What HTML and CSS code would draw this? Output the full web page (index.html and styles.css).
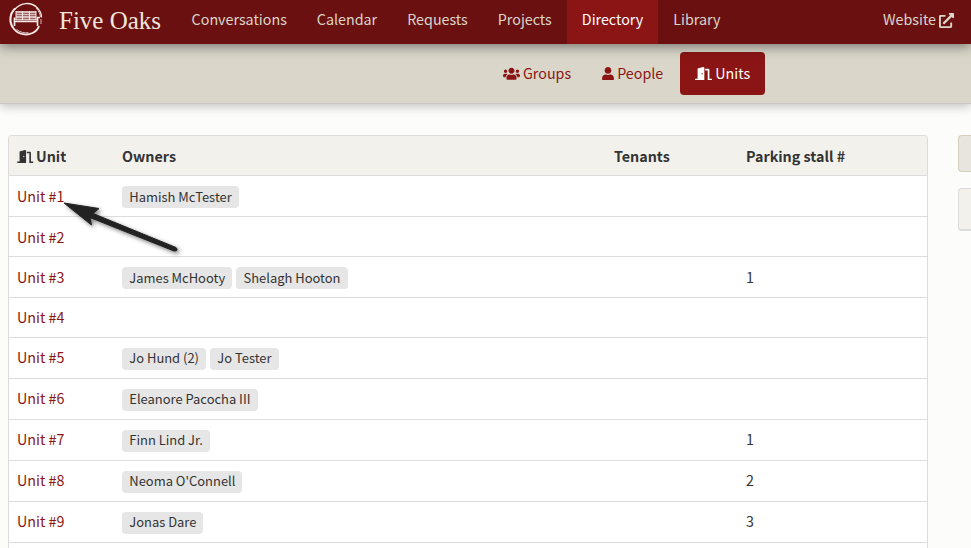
FILE: index.html
```html
<!DOCTYPE html>
<html lang="en">
<head>
<meta charset="utf-8">
<title>Five Oaks</title>
<link rel="stylesheet" href="styles.css">
</head>
<body>
<svg class="defs" width="0" height="0">
  <symbol id="door" viewBox="0 0 640 512"><path d="M624 448h-80V113.450C544 86.190 522.470 64 496 64H384v64h96v384h144c8.840 0 16-7.160 16-16v-32c0-8.840-7.160-16-16-16zM312.240 1.010l-192 49.740C105.990 54.440 96 67.700 96 82.920V448H16c-8.840 0-16 7.160-16 16v32c0 8.840 7.160 16 16 16h336V33.180c0-21.580-19.560-37.410-39.760-32.170zM264 288c-13.250 0-24-14.330-24-32s10.750-32 24-32 24 14.330 24 32-10.750 32-24 32z"/></symbol>
</svg>
<header class="topbar">
  <svg class="logo" viewBox="0 0 36 36" fill="none" stroke="#f4e9e6">
    <path d="M7 7.500C1.500 13 1 22 6 28s13 6.500 18.500 4c3.500-1.600 5.500-4 6.500-7" stroke-width="1.900"/>
    <path d="M6.500 8.500C13 1 23 .8 29 6.500c3 3 4.500 7 4.500 10" stroke-width="1.300"/>
    <path d="M3.500 11C1 17 1.500 23 4.500 27M28 7c3 3 4 6 4.500 9M33 18v5M8.500 28.500c4 3 8 3.600 12 3.200" stroke-width=".8"/>
    <path d="M8 11h20M8 13.500h20M8 16h20M7.500 18.500h21" stroke-width="1.800" opacity=".8"/>
    <path d="M8 10v9M14.500 10v9M21.500 10v9M28 10v9" stroke-width="1"/>
    <path d="M6 20.500h24M6.500 16.500v8.500M29.500 16.500v8.500M29 16.500h3" stroke-width="1.700"/>
  </svg>
  <a class="brand">Five Oaks</a>
  <nav class="mainnav">
    <a>Conversations</a><a>Calendar</a><a>Requests</a><a>Projects</a><a class="active">Directory</a><a>Library</a>
  </nav>
  <a class="website">Website <svg viewBox="0 0 512 512"><path d="M432,320H400a16,16,0,0,0-16,16V448H64V128H208a16,16,0,0,0,16-16V80a16,16,0,0,0-16-16H48A48,48,0,0,0,0,112V464a48,48,0,0,0,48,48H400a48,48,0,0,0,48-48V336A16,16,0,0,0,432,320ZM488,0h-128c-21.370,0-32.050,25.910-17,41l35.730,35.730L135,320.370a24,24,0,0,0,0,34L157.670,377a24,24,0,0,0,34,0L435.280,133.320,471,169c15,15,41,4.500,41-17V24A24,24,0,0,0,488,0Z"/></svg></a>
</header>
<div class="subnav">
  <a class="groups"><svg viewBox="0 0 640 512"><path d="M96 224c35.300 0 64-28.700 64-64s-28.700-64-64-64-64 28.700-64 64 28.700 64 64 64zm448 0c35.300 0 64-28.700 64-64s-28.700-64-64-64-64 28.700-64 64 28.700 64 64 64zm32 32h-64c-17.600 0-33.500 7.100-45.100 18.600 40.300 22.100 68.900 62 75.100 109.400h66c17.700 0 32-14.300 32-32v-32c0-35.300-28.700-64-64-64zm-256 0c61.900 0 112-50.100 112-112S381.900 32 320 32 208 82.100 208 144s50.100 112 112 112zm76.800 32h-8.300c-20.800 10-43.900 16-68.500 16s-47.600-6-68.500-16h-8.300C179.600 288 128 339.600 128 403.200V432c0 26.500 21.500 48 48 48h288c26.500 0 48-21.500 48-48v-28.800c0-63.600-51.600-115.200-115.200-115.200zm-223.700-13.400C161.500 263.100 145.600 256 128 256H64c-35.300 0-64 28.700-64 64v32c0 17.700 14.300 32 32 32h65.900c6.300-47.400 34.900-87.300 75.200-109.400z"/></svg>Groups</a>
  <a class="people"><svg viewBox="0 0 448 512"><path d="M224 256c70.700 0 128-57.300 128-128S294.700 0 224 0 96 57.300 96 128s57.300 128 128 128zm89.600 32h-16.700c-22.200 10.200-46.900 16-72.900 16s-50.600-5.800-72.900-16h-16.700C60.200 288 0 348.200 0 422.400V464c0 26.500 21.500 48 48 48h352c26.500 0 48-21.500 48-48v-41.600c0-74.200-60.200-134.400-134.400-134.400z"/></svg>People</a>
  <a class="units"><svg><use href="#door"/></svg>Units</a>
</div>
<main class="content">
  <section class="units-table">
    <div class="row head"><span><svg><use href="#door"/></svg>Unit</span><span>Owners</span><span>Tenants</span><span>Parking stall #</span></div>
    <div class="row"><a>Unit #1</a><div class="owners"><b>Hamish McTester</b></div><span></span><span></span></div>
    <div class="row short"><a>Unit #2</a><div></div><span></span><span></span></div>
    <div class="row"><a>Unit #3</a><div class="owners"><b>James McHooty</b><b>Shelagh Hooton</b></div><span></span><span>1</span></div>
    <div class="row short"><a>Unit #4</a><div></div><span></span><span></span></div>
    <div class="row"><a>Unit #5</a><div class="owners"><b>Jo Hund (2)</b><b>Jo Tester</b></div><span></span><span></span></div>
    <div class="row"><a>Unit #6</a><div class="owners"><b>Eleanore Pacocha III</b></div><span></span><span></span></div>
    <div class="row"><a>Unit #7</a><div class="owners"><b>Finn Lind Jr.</b></div><span></span><span>1</span></div>
    <div class="row"><a>Unit #8</a><div class="owners"><b>Neoma O'Connell</b></div><span></span><span>2</span></div>
    <div class="row"><a>Unit #9</a><div class="owners"><b>Jonas Dare</b></div><span></span><span>3</span></div>
  </section>
  <aside class="side"><div class="button"></div><div class="card"></div></aside>
</main>
<svg class="pointer" width="140" height="70" viewBox="0 0 140 70">
  <path d="M9 8L44 13.500 38 18.500 121 52.500Q124 56 119 56L35 22.500 36.500 30Z" fill="#222" stroke="#222" stroke-width="1" stroke-linejoin="round"/>
</svg>
</body>
</html>
```

FILE: styles.css
```css
* { box-sizing: border-box; }
body {
  margin: 0;
  height: 548px;
  overflow: hidden;
  background: #fcfcfa;
  color: #333;
  font: 14.3px/24px "Noto Sans CJK SC", "Noto Sans", sans-serif;
}
.defs { position: absolute; }
svg { fill: currentColor; flex: none; }
.topbar {
  position: relative;
  display: flex;
  align-items: center;
  height: 44px;
  padding: 0 17px 0 8px;
  background: #6b1010;
  color: #dad7ca;
  box-shadow: 0 2px 12px rgba(0, 0, 0, .5);
}
.logo { width: 36px; height: 36px; margin-top: -6px; fill: none; }
.brand {
  width: 117.600px;
  margin-left: 15px;
  font: 25px/40px "Liberation Serif", serif;
  letter-spacing: 0;
  color: #eee7dc;
  white-space: nowrap;
  margin-top: -3px;
}
.mainnav { display: flex; height: 44px; }
.mainnav a { padding: 0 15px; line-height: 38px; }
.mainnav .active { background: #8b1515; color: #fff; }
.website { display: flex; align-items: center; gap: 3px; margin-left: auto; line-height: 38px; height: 38px; margin-bottom: 6px; }
.website svg { width: 15px; height: 15px; margin-top: 2px; }
.subnav {
  display: flex;
  height: 60px;
  padding: 8px 0 0 488px;
  background: #dad7ca;
  border-bottom: 1px solid #c8c7c2;
  box-shadow: 0 2px 10px rgba(0, 0, 0, .25);
  color: #8b1515;
}
.subnav a { display: flex; align-items: center; gap: 3px; height: 43px; padding: 0 15px 2px; border-radius: 4px; }
.subnav svg { width: 17px; height: 13.500px; margin-top: 2px; }
.subnav .people { margin-left: 1px; }
.subnav .people svg { width: 12px; }
.subnav .units { background: #8b1515; color: #fff; margin-left: 2px; }
.content { display: flex; gap: 30px; height: 444px; padding: 31px 0 0 8px; overflow: hidden; }
.units-table {
  width: 920px;
  height: 413px;
  flex: none;
  border: 1px solid #dcdcdc;
  border-bottom: 0;
  border-radius: 4px 4px 0 0;
  background: #fff;
  overflow: hidden;
}
.row {
  display: grid;
  grid-template-columns: 105px 492px 132px 1fr;
  align-items: center;
  height: 41px;
  border-bottom: 1px solid #dcdcdc;
}
.row > * { padding: 0 8px; }
.row > a, .row > span { margin-top: -1px; }
.row > a { color: #8b1515; }
.row.short { height: 40px; }
.row:nth-child(3) > a { margin-top: 1px; }
.row:nth-child(n+6) > a, .row:nth-child(n+6) > span { margin-top: -3px; }
.row.head { height: 40px; background: #f2f1ec; font-weight: 700; }
.row.head > span { margin-top: 1px; }
.head span { display: flex; align-items: center; gap: 2.500px; }
.head svg { width: 16.500px; height: 13px; margin-top: 1px; }
.owners { display: flex; gap: 4px; margin-top: 2px; }
.owners b {
  height: 22px;
  padding: 0 7px 0 7.300px;
  border-radius: 4px;
  background: #e6e6e6;
  font-weight: 400;
  font-size: 12.95px;
  line-height: 21px;
}
.row:nth-child(n+6) b { line-height: 20px; }
.side { flex: 1; }
.button { height: 37px; border: 1px solid #d4cfbf; border-right: 0; border-radius: 4px 0 0 4px; background: #e8e5de; }
.card { height: 43px; margin-top: 16px; border: 1px solid #dcdcdc; border-width: 1px 0 2px 1px; border-radius: 4px 0 0 4px; background: #f2f1ec; }
.pointer { position: absolute; left: 55px; top: 195px; filter: drop-shadow(2px 2px 2px rgba(0, 0, 0, .5)); }
```
